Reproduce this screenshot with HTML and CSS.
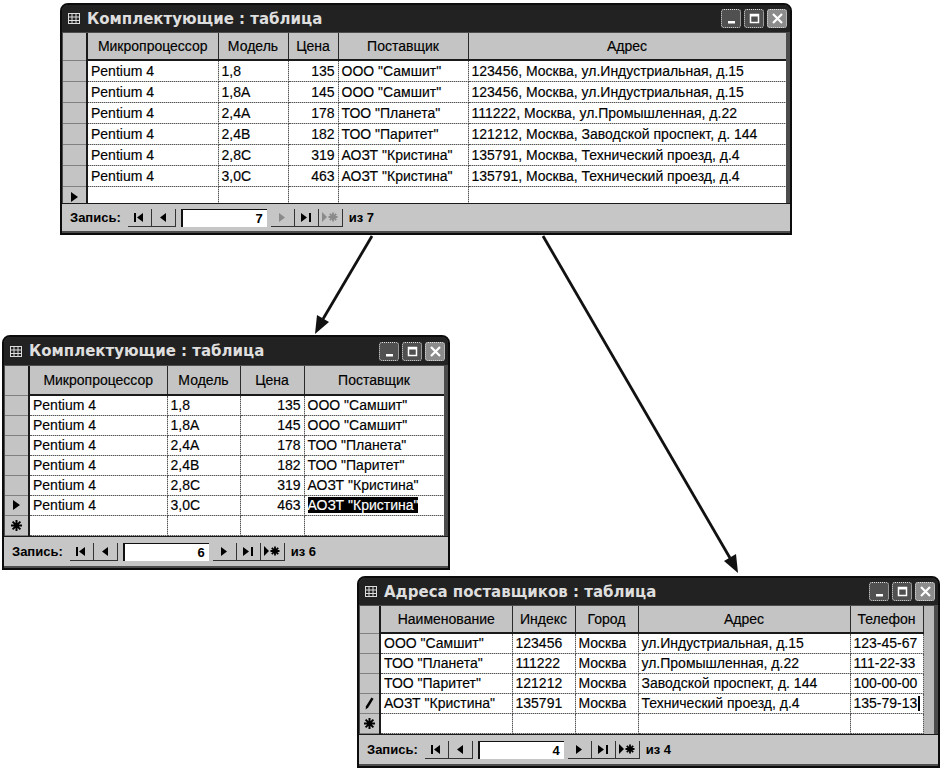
FILE: index.html
```html
<!DOCTYPE html>
<html lang="ru">
<head>
    <meta charset="UTF-8">
    <title>Комплектующие и поставщики</title>
    <link rel="stylesheet" href="styles.css">
</head>
<body>
<div class="figure">
    <svg class="arrows" width="945" height="771" viewBox="0 0 945 771">
        <line x1="372" y1="236" x2="323" y2="319"/>
        <polygon points="315,334 329,322 317,315"/>
        <line x1="543" y1="236" x2="730" y2="558"/>
        <polygon points="738,573 724,561 736,554"/>
    </svg>

    <!-- Комплектующие: полная таблица -->
    <div class="win win-parts">
        <div class="titlebar">
            <svg class="ticon" width="12" height="11" viewBox="0 0 12 11"><rect x="0.5" y="0.5" width="11" height="10" fill="none" stroke="#ddd"/><path d="M0 4h12M0 7.5h12M4 0v11M8 0v11" stroke="#ddd"/></svg>
            <span class="title">Комплектующие : таблица</span>
            <div class="tbtns">
                <span class="tb"><svg width="11" height="11" viewBox="0 0 11 11"><rect x="2" y="8" width="7" height="2.5" fill="#fff"/></svg></span>
                <span class="tb"><svg width="11" height="11" viewBox="0 0 11 11"><rect x="1.5" y="1.5" width="8" height="8" fill="none" stroke="#fff" stroke-width="1.5"/><rect x="1" y="1" width="9" height="2.5" fill="#fff"/></svg></span>
                <span class="tb tb-close"><svg width="11" height="11" viewBox="0 0 11 11"><path d="M1 1l9 9M10 1l-9 9" stroke="#fff" stroke-width="2.2"/></svg></span>
            </div>
        </div>
        <div class="sheet">
            <table class="grid">
                <colgroup>
                    <col class="c-sel"><col class="c-cpu"><col class="c-model"><col class="c-price"><col class="c-supp"><col class="c-addr">
                </colgroup>
                <thead>
                    <tr><th class="sel"></th><th>Микропроцессор</th><th>Модель</th><th>Цена</th><th>Поставщик</th><th>Адрес</th></tr>
                </thead>
                <tbody>
                    <tr><td class="sel"></td><td>Pentium 4</td><td>1,8</td><td class="num">135</td><td>ООО "Самшит"</td><td>123456, Москва, ул.Индустриальная, д.15</td></tr>
                    <tr><td class="sel"></td><td>Pentium 4</td><td>1,8A</td><td class="num">145</td><td>ООО "Самшит"</td><td>123456, Москва, ул.Индустриальная, д.15</td></tr>
                    <tr><td class="sel"></td><td>Pentium 4</td><td>2,4A</td><td class="num">178</td><td>ТОО "Планета"</td><td>111222, Москва, ул.Промышленная, д.22</td></tr>
                    <tr><td class="sel"></td><td>Pentium 4</td><td>2,4B</td><td class="num">182</td><td>ТОО "Паритет"</td><td>121212, Москва, Заводской проспект, д. 144</td></tr>
                    <tr><td class="sel"></td><td>Pentium 4</td><td>2,8C</td><td class="num">319</td><td>АОЗТ "Кристина"</td><td>135791, Москва, Технический проезд, д.4</td></tr>
                    <tr><td class="sel"></td><td>Pentium 4</td><td>3,0C</td><td class="num">463</td><td>АОЗТ "Кристина"</td><td>135791, Москва, Технический проезд, д.4</td></tr>
                    <tr><td class="sel"><svg width="7" height="10" viewBox="0 0 7 10"><polygon points="0,0 7,5 0,10"/></svg></td><td></td><td></td><td></td><td></td><td></td></tr>
                </tbody>
            </table>
        </div>
        <div class="nav">
            <span class="nav-label">Запись:</span>
            <span class="nb"><svg width="10" height="9" viewBox="0 0 10 9"><rect x="0" y="0" width="2" height="9"/><polygon points="9,0 3,4.5 9,9"/></svg></span>
            <span class="nb"><svg width="6" height="9" viewBox="0 0 6 9"><polygon points="6,0 0,4.5 6,9"/></svg></span>
            <span class="nav-num">7</span>
            <span class="nb off"><svg width="6" height="9" viewBox="0 0 6 9"><polygon points="0,0 6,4.5 0,9"/></svg></span>
            <span class="nb"><svg width="10" height="9" viewBox="0 0 10 9"><polygon points="0,0 6,4.5 0,9"/><rect x="8" y="0" width="2" height="9"/></svg></span>
            <span class="nb off"><svg width="16" height="10" viewBox="0 0 16 10"><polygon points="0,0 5,5 0,10"/><path d="M11 0.5v9M6.5 5h9M7.8 1.8l6.4 6.4M14.2 1.8l-6.4 6.4" stroke="currentColor" stroke-width="1.8"/></svg></span>
            <span class="nav-of">из 7</span>
        </div>
    </div>

    <!-- Комплектующие: без адреса -->
    <div class="win win-short">
        <div class="titlebar">
            <svg class="ticon" width="12" height="11" viewBox="0 0 12 11"><rect x="0.5" y="0.5" width="11" height="10" fill="none" stroke="#ddd"/><path d="M0 4h12M0 7.5h12M4 0v11M8 0v11" stroke="#ddd"/></svg>
            <span class="title">Комплектующие : таблица</span>
            <div class="tbtns">
                <span class="tb"><svg width="11" height="11" viewBox="0 0 11 11"><rect x="2" y="8" width="7" height="2.5" fill="#fff"/></svg></span>
                <span class="tb"><svg width="11" height="11" viewBox="0 0 11 11"><rect x="1.5" y="1.5" width="8" height="8" fill="none" stroke="#fff" stroke-width="1.5"/><rect x="1" y="1" width="9" height="2.5" fill="#fff"/></svg></span>
                <span class="tb tb-close"><svg width="11" height="11" viewBox="0 0 11 11"><path d="M1 1l9 9M10 1l-9 9" stroke="#fff" stroke-width="2.2"/></svg></span>
            </div>
        </div>
        <div class="sheet">
            <table class="grid">
                <colgroup>
                    <col class="c-sel"><col class="c-cpu"><col class="c-model"><col class="c-price"><col class="c-supp">
                </colgroup>
                <thead>
                    <tr><th class="sel"></th><th>Микропроцессор</th><th>Модель</th><th>Цена</th><th>Поставщик</th></tr>
                </thead>
                <tbody>
                    <tr><td class="sel"></td><td>Pentium 4</td><td>1,8</td><td class="num">135</td><td>ООО "Самшит"</td></tr>
                    <tr><td class="sel"></td><td>Pentium 4</td><td>1,8A</td><td class="num">145</td><td>ООО "Самшит"</td></tr>
                    <tr><td class="sel"></td><td>Pentium 4</td><td>2,4A</td><td class="num">178</td><td>ТОО "Планета"</td></tr>
                    <tr><td class="sel"></td><td>Pentium 4</td><td>2,4B</td><td class="num">182</td><td>ТОО "Паритет"</td></tr>
                    <tr><td class="sel"></td><td>Pentium 4</td><td>2,8C</td><td class="num">319</td><td>АОЗТ "Кристина"</td></tr>
                    <tr><td class="sel"><svg width="7" height="10" viewBox="0 0 7 10"><polygon points="0,0 7,5 0,10"/></svg></td><td>Pentium 4</td><td>3,0C</td><td class="num">463</td><td><span class="hl">АОЗТ "Кристина"</span></td></tr>
                    <tr><td class="sel"><svg width="11" height="11" viewBox="0 0 11 11"><path d="M5.5 0v11M0 5.5h11M1.6 1.6l7.8 7.8M9.4 1.6l-7.8 7.8" stroke="#000" stroke-width="2"/></svg></td><td></td><td></td><td></td><td></td></tr>
                </tbody>
            </table>
        </div>
        <div class="nav">
            <span class="nav-label">Запись:</span>
            <span class="nb"><svg width="10" height="9" viewBox="0 0 10 9"><rect x="0" y="0" width="2" height="9"/><polygon points="9,0 3,4.5 9,9"/></svg></span>
            <span class="nb"><svg width="6" height="9" viewBox="0 0 6 9"><polygon points="6,0 0,4.5 6,9"/></svg></span>
            <span class="nav-num">6</span>
            <span class="nb"><svg width="6" height="9" viewBox="0 0 6 9"><polygon points="0,0 6,4.5 0,9"/></svg></span>
            <span class="nb"><svg width="10" height="9" viewBox="0 0 10 9"><polygon points="0,0 6,4.5 0,9"/><rect x="8" y="0" width="2" height="9"/></svg></span>
            <span class="nb"><svg width="16" height="10" viewBox="0 0 16 10"><polygon points="0,0 5,5 0,10"/><path d="M11 0.5v9M6.5 5h9M7.8 1.8l6.4 6.4M14.2 1.8l-6.4 6.4" stroke="currentColor" stroke-width="1.8"/></svg></span>
            <span class="nav-of">из 6</span>
        </div>
    </div>

    <!-- Адреса поставщиков -->
    <div class="win win-addr">
        <div class="titlebar">
            <svg class="ticon" width="12" height="11" viewBox="0 0 12 11"><rect x="0.5" y="0.5" width="11" height="10" fill="none" stroke="#ddd"/><path d="M0 4h12M0 7.5h12M4 0v11M8 0v11" stroke="#ddd"/></svg>
            <span class="title">Адреса поставщиков : таблица</span>
            <div class="tbtns">
                <span class="tb"><svg width="11" height="11" viewBox="0 0 11 11"><rect x="2" y="8" width="7" height="2.5" fill="#fff"/></svg></span>
                <span class="tb"><svg width="11" height="11" viewBox="0 0 11 11"><rect x="1.5" y="1.5" width="8" height="8" fill="none" stroke="#fff" stroke-width="1.5"/><rect x="1" y="1" width="9" height="2.5" fill="#fff"/></svg></span>
                <span class="tb tb-close"><svg width="11" height="11" viewBox="0 0 11 11"><path d="M1 1l9 9M10 1l-9 9" stroke="#fff" stroke-width="2.2"/></svg></span>
            </div>
        </div>
        <div class="sheet">
            <table class="grid">
                <colgroup>
                    <col class="c-sel"><col class="c-name"><col class="c-zip"><col class="c-city"><col class="c-addr"><col class="c-phone">
                </colgroup>
                <thead>
                    <tr><th class="sel"></th><th>Наименование</th><th>Индекс</th><th>Город</th><th>Адрес</th><th>Телефон</th></tr>
                </thead>
                <tbody>
                    <tr><td class="sel"></td><td>ООО "Самшит"</td><td>123456</td><td>Москва</td><td>ул.Индустриальная, д.15</td><td>123-45-67</td></tr>
                    <tr><td class="sel"></td><td>ТОО "Планета"</td><td>111222</td><td>Москва</td><td>ул.Промышленная, д.22</td><td>111-22-33</td></tr>
                    <tr><td class="sel"></td><td>ТОО "Паритет"</td><td>121212</td><td>Москва</td><td>Заводской проспект, д. 144</td><td>100-00-00</td></tr>
                    <tr><td class="sel"><svg width="9" height="13" viewBox="0 0 9 13"><path d="M6.4 0.5 L8.6 1.8 L3.2 10.6 L0.6 12.6 L1 9.3 Z"/></svg></td><td>АОЗТ "Кристина"</td><td>135791</td><td>Москва</td><td>Технический проезд, д.4</td><td>135-79-13<span class="caret"></span></td></tr>
                    <tr><td class="sel"><svg width="11" height="11" viewBox="0 0 11 11"><path d="M5.5 0v11M0 5.5h11M1.6 1.6l7.8 7.8M9.4 1.6l-7.8 7.8" stroke="#000" stroke-width="2"/></svg></td><td></td><td></td><td></td><td></td><td></td></tr>
                </tbody>
            </table>
        </div>
        <div class="nav">
            <span class="nav-label">Запись:</span>
            <span class="nb"><svg width="10" height="9" viewBox="0 0 10 9"><rect x="0" y="0" width="2" height="9"/><polygon points="9,0 3,4.5 9,9"/></svg></span>
            <span class="nb"><svg width="6" height="9" viewBox="0 0 6 9"><polygon points="6,0 0,4.5 6,9"/></svg></span>
            <span class="nav-num">4</span>
            <span class="nb"><svg width="6" height="9" viewBox="0 0 6 9"><polygon points="0,0 6,4.5 0,9"/></svg></span>
            <span class="nb"><svg width="10" height="9" viewBox="0 0 10 9"><polygon points="0,0 6,4.5 0,9"/><rect x="8" y="0" width="2" height="9"/></svg></span>
            <span class="nb"><svg width="16" height="10" viewBox="0 0 16 10"><polygon points="0,0 5,5 0,10"/><path d="M11 0.5v9M6.5 5h9M7.8 1.8l6.4 6.4M14.2 1.8l-6.4 6.4" stroke="currentColor" stroke-width="1.8"/></svg></span>
            <span class="nav-of">из 4</span>
        </div>
    </div>
</div>
</body>
</html>
```

FILE: styles.css
```css
body {
    margin: 0;
    background-color: #fff;
    font-family: "Liberation Sans", Arial, sans-serif;
}
.figure {
    position: relative;
    width: 945px;
    height: 771px;
    overflow: hidden;
}
.arrows {
    position: absolute;
    left: 0;
    top: 0;
}
.arrows line {
    stroke: #111;
    stroke-width: 2.8;
}
.arrows polygon {
    fill: #111;
}

/* окна */
.win {
    position: absolute;
    box-sizing: border-box;
    display: flex;
    flex-direction: column;
    padding: 0 4px 2px 1px;
    border: 2px solid #0c0c0c;
    border-radius: 8px 8px 0 0;
    background-color: #4c4c4c;
}
.win-parts {
    left: 60px;
    top: 3px;
    width: 732px;
    height: 232px;
}
.win-short {
    left: 2px;
    top: 335px;
    width: 448px;
    height: 235px;
}
.win-addr {
    left: 357px;
    top: 576px;
    width: 583px;
    height: 192px;
}
.titlebar {
    display: flex;
    align-items: center;
    gap: 7px;
    height: 27px;
    margin: 0 -4px 1px -1px;
    padding: 0 3px 0 6px;
    border-radius: 6px 6px 0 0;
    background-color: #222;
    color: #dedede;
    font-family: "DejaVu Sans", Verdana, sans-serif;
    font-size: 15px;
    font-weight: bold;
}
.win-short .titlebar {
    height: 28px;
}
.title {
    flex: 1;
    white-space: nowrap;
}
.tbtns {
    display: flex;
    gap: 3px;
}
.tb {
    display: flex;
    align-items: center;
    justify-content: center;
    width: 20px;
    height: 19px;
    box-sizing: border-box;
    border: 1px dotted #e0e0e0;
    border-radius: 3px;
    background-color: #505050;
}
.tb-close {
    background-color: #8c8c8c;
}

/* таблица */
.sheet {
    flex: 1;
    overflow: hidden;
    background-color: #b9b9b9;
}
.grid {
    table-layout: fixed;
    border-collapse: collapse;
    font-size: 14px;
    color: #000;
    -webkit-text-stroke: 0.15px #000;
}
.grid th, .grid td {
    padding: 0 3px;
    white-space: nowrap;
    overflow: hidden;
}
.grid th {
    font-weight: normal;
    text-align: center;
    background-color: #c4c4c4;
    border-right: 1px solid #2a2a2a;
    border-bottom: 2px solid #1a1a1a;
}
.grid td {
    background-color: #fff;
    border-right: 1px dotted #555;
    border-bottom: 1px dotted #555;
}
.grid .sel {
    padding: 0;
    text-align: center;
    background-color: #c4c4c4;
    border-right: 2px solid #1a1a1a;
    border-bottom: 1px solid #808080;
}
.grid .sel svg {
    display: block;
    margin: 0 auto;
}
.grid .num {
    text-align: right;
}
.hl {
    background-color: #000;
    color: #fff;
    -webkit-text-stroke: 0.15px #fff;
}
.caret {
    display: inline-block;
    width: 2px;
    height: 15px;
    margin-left: 1px;
    vertical-align: middle;
    background-color: #000;
}

.win-parts .grid { width: 723px; }
.win-parts thead tr { height: 27px; }
.win-parts tbody tr { height: 21px; }
.win-parts .c-sel { width: 24px; }
.win-parts .c-cpu { width: 131px; }
.win-parts .c-model { width: 70px; }
.win-parts .c-price { width: 50px; }
.win-parts .c-supp { width: 130px; }
.win-parts .c-addr { width: 318px; }

.win-short .grid { width: 439px; }
.win-short thead tr { height: 29px; }
.win-short tbody tr { height: 20px; }
.win-short .c-sel { width: 24px; }
.win-short .c-cpu { width: 138px; }
.win-short .c-model { width: 73px; }
.win-short .c-price { width: 64px; }
.win-short .c-supp { width: 140px; }

.win-addr .grid { width: 563px; }
.win-addr thead tr { height: 27px; }
.win-addr tbody tr { height: 20px; }
.win-addr .c-sel { width: 20px; }
.win-addr .c-name { width: 132px; }
.win-addr .c-zip { width: 63px; }
.win-addr .c-city { width: 63px; }
.win-addr .c-addr { width: 212px; }
.win-addr .c-phone { width: 73px; }

/* навигация */
.nav {
    display: flex;
    align-items: center;
    height: 28px;
    box-sizing: border-box;
    margin: 0 -4px 0 -1px;
    padding-left: 8px;
    border-top: 1px solid #1a1a1a;
    background-color: #c6c6c6;
    font-size: 13px;
    font-weight: bold;
}
.win-short .nav, .win-addr .nav {
    height: 30px;
}
.nav-label {
    margin-right: 7px;
}
.nb {
    display: flex;
    align-items: center;
    justify-content: center;
    width: 24px;
    height: 18px;
    box-sizing: border-box;
    border-right: 1px solid #333;
    border-bottom: 1px solid #333;
    color: #000;
}
.nb svg {
    fill: currentColor;
}
.nb.off {
    color: #8a8a8a;
}
.nav-num {
    width: 86px;
    height: 18px;
    box-sizing: border-box;
    margin: 0 4px 0 5px;
    padding-right: 4px;
    border-left: 2px solid #111;
    border-top: 1px solid #111;
    background-color: #fff;
    text-align: right;
    line-height: 17px;
}
.nav-of {
    margin-left: 6px;
}
```
